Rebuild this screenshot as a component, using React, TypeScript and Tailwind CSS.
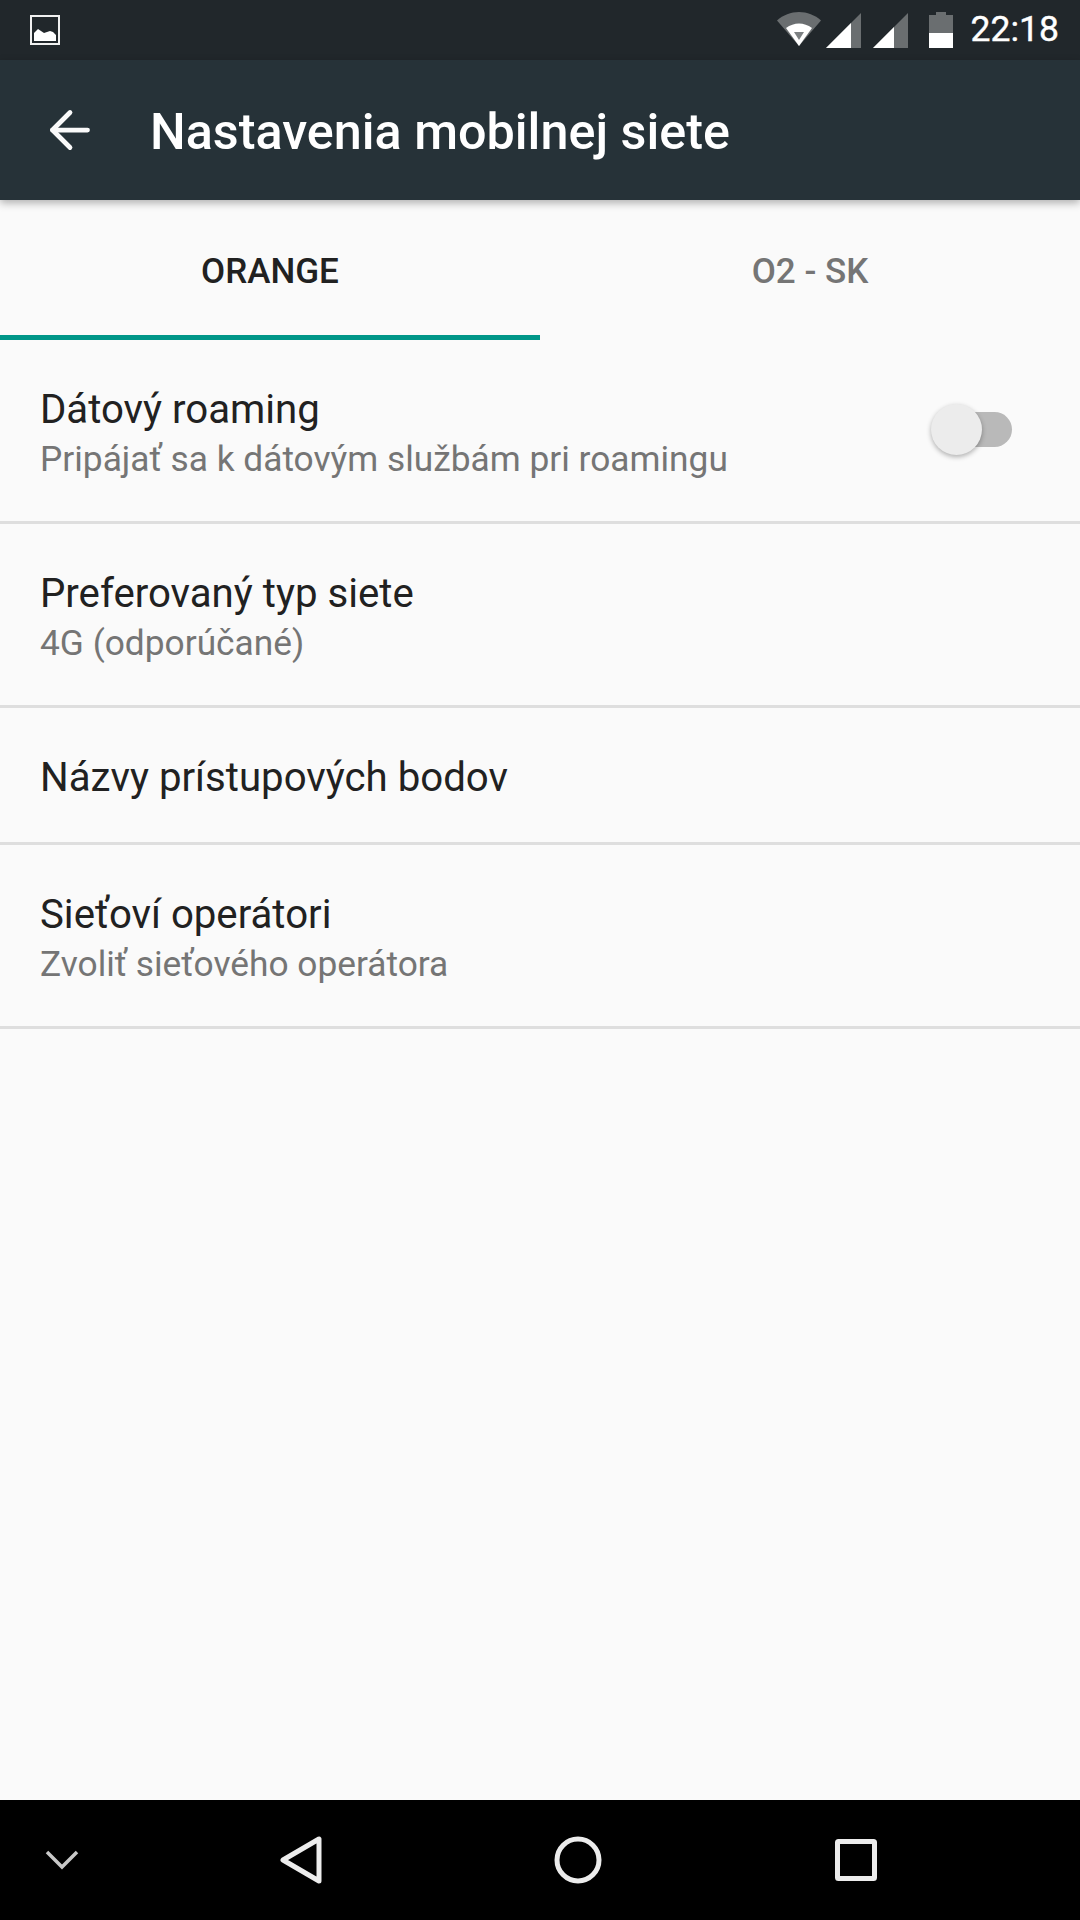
import { ArrowLeft } from 'lucide-react'

const FONT = "font-['Roboto','Noto_Sans',sans-serif]"

interface Pref {
  title: string
  summary?: string
  toggle?: boolean
}

const PREFS: Pref[] = [
  { title: 'Dátový roaming', summary: 'Pripájať sa k dátovým službám pri roamingu', toggle: true },
  { title: 'Preferovaný typ siete', summary: '4G (odporúčané)' },
  { title: 'Názvy prístupových bodov' },
  { title: 'Sieťoví operátori', summary: 'Zvoliť sieťového operátora' },
]

export default function App() {
  return (
    <div className={`${FONT} flex h-[1920px] w-[1080px] flex-col overflow-hidden bg-[#fafafa]`}>
      <StatusBar />
      <div className="relative z-10 flex h-[140px] shrink-0 items-center bg-[#263238] shadow-[0_3px_8px_rgba(0,0,0,0.3)]">
        <ArrowLeft className="ml-[40px] h-[60px] w-[60px] text-[#fafafa]" strokeWidth={1.9} />
        <h1 className="ml-[50px] pt-[4px] text-[50.3px] font-medium leading-none text-white">Nastavenia mobilnej siete</h1>
      </div>

      <div className="flex h-[140px] shrink-0">
        <div className="flex w-[540px] items-center justify-center border-b-[5px] border-[#009688] pt-[10px] text-[35px] font-medium text-[#212121]">
          ORANGE
        </div>
        <div className="flex w-[540px] items-center justify-center pb-[5px] pt-[10px] text-[35px] font-medium text-[#757575]">
          O2 - SK
        </div>
      </div>

      <div className="flex flex-col">
        {PREFS.map((p) => (
          <PrefRow key={p.title} {...p} />
        ))}
      </div>

      <div className="flex-1" />
      <NavBar />
    </div>
  )
}

function PrefRow({ title, summary, toggle }: Pref) {
  return (
    <div className={`flex items-center border-b-[3px] border-[#dedede] pl-[40px] pr-[68px] ${summary ? 'h-[184px]' : 'h-[137px]'}`}>
      <div className={`min-w-0 flex-1 ${summary ? 'pt-[8px]' : 'pt-[6px]'}`}>
        <div className="text-[40.2px] leading-[50px] text-[#212121]">{title}</div>
        {summary && <div className="text-[35.3px] leading-[49px] text-[#757575]">{summary}</div>}
      </div>
      {toggle && (
        <div className="relative mb-[2px] h-[35px] w-[80px] rounded-full bg-[#b9b9b9]">
          <div className="absolute -left-[1px] -top-[8px] h-[51px] w-[51px] rounded-full bg-[#ececec] shadow-[0_2px_5px_rgba(0,0,0,0.3)]" />
        </div>
      )}
    </div>
  )
}

function StatusBar() {
  return (
    <div className="flex h-[60px] shrink-0 items-center bg-[#21272b] pl-[30px] pr-[21px]">
      <svg width="30" height="30" viewBox="0 0 30 30">
        <rect x="1" y="1" width="28" height="28" fill="none" stroke="#f0f0f0" strokeWidth="2" />
        <path d="M4 26V18l4-4 3 2 3 2 3-1 3-1 3 1 3 3v6z" fill="#fff" />
      </svg>
      <div className="flex-1" />
      <svg width="44" height="34" viewBox="0 0 44 34" className="mb-[2px]">
        <path d="M0 8.5C6 3 14 0 22 0s16 3 22 8.5L22 34z" fill="#6a6e70" />
        <path d="M9 16c4-3 8.500-4.500 13-4.500S31 13 35 16L22 34z" fill="#fff" />
        <path d="M17 20h10l-5 8z" fill="#7d8183" />
      </svg>
      <svg width="35" height="35" viewBox="0 0 35 35" className="ml-[5px]">
        <path d="M35 0v35H0z" fill="#6a6e70" />
        <path d="M25 10v25H0z" fill="#fff" />
      </svg>
      <svg width="35" height="35" viewBox="0 0 35 35" className="ml-[12px]">
        <path d="M35 0v35H0z" fill="#6a6e70" />
        <path d="M21 14v21H0z" fill="#fff" />
      </svg>
      <svg width="24" height="36" viewBox="0 0 24 36" className="ml-[21px]">
        <path d="M7 0h10v3h7v33H0V3h7z" fill="#6a6e70" />
        <path d="M0 21h24v15H0z" fill="#fff" />
      </svg>
      <span className="ml-[18px] text-[35.5px] leading-none text-white [-webkit-text-stroke:0.4px_white]">22:18</span>
    </div>
  )
}

function NavBar() {
  return (
    <div className="flex h-[120px] shrink-0 items-center bg-black">
      <svg width="34" height="20" viewBox="0 0 34 20" className="ml-[45px]">
        <path d="M2 2l15 15L32 2" fill="none" stroke="#c8c8c8" strokeWidth="3.500" />
      </svg>
      <svg width="44" height="48" viewBox="0 0 44 48" className="ml-[201px]">
        <path d="M39 3v42L3 24z" fill="none" stroke="#ececec" strokeWidth="5" strokeLinejoin="round" />
      </svg>
      <svg width="48" height="48" viewBox="0 0 48 48" className="ml-[230px]">
        <circle cx="24" cy="24" r="21" fill="none" stroke="#ececec" strokeWidth="5" />
      </svg>
      <svg width="42" height="42" viewBox="0 0 42 42" className="ml-[233px]">
        <rect x="2.500" y="2.500" width="37" height="37" rx="1" fill="none" stroke="#ececec" strokeWidth="5" />
      </svg>
    </div>
  )
}
